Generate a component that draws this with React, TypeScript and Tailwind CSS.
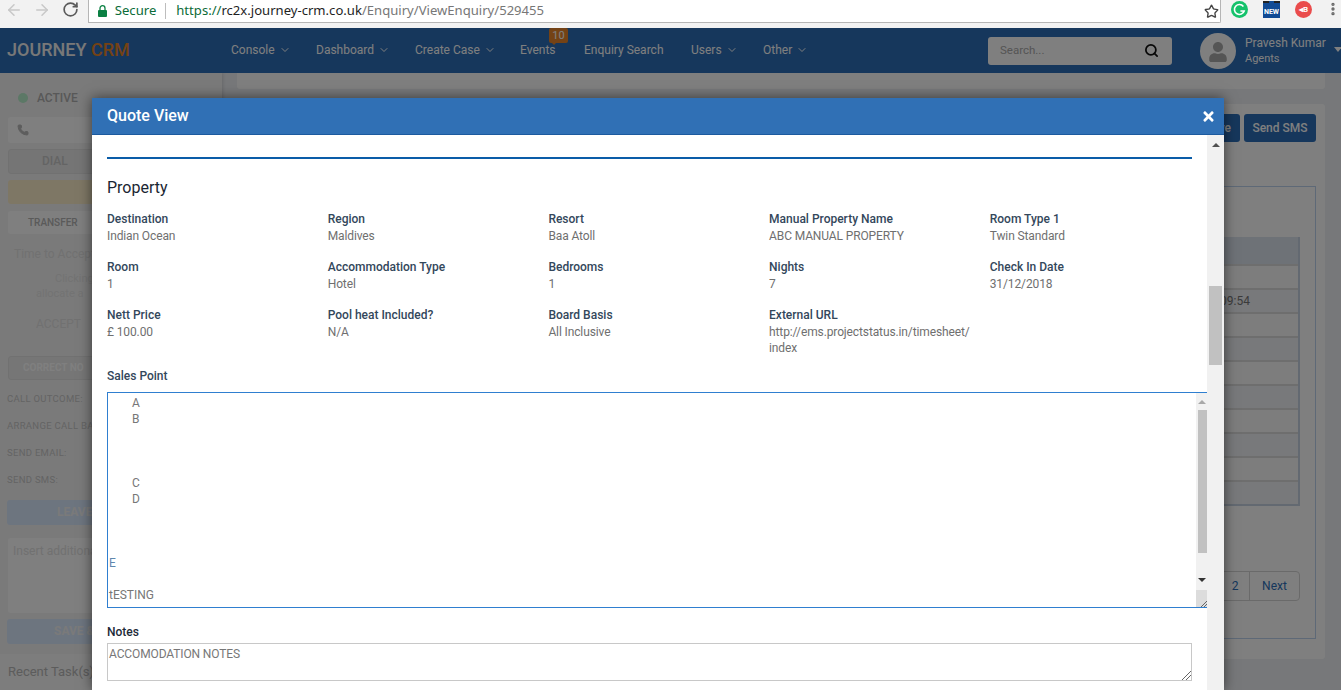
import React from 'react';
import { ArrowLeft, ArrowRight, ChevronDown, MoreVertical, Phone, RotateCw, Search, Star } from 'lucide-react';
import { FaTimes, FaUser } from 'react-icons/fa';

const navItems = [
  { label: 'Console', chevron: true, width: 'w-[85px]' },
  { label: 'Dashboard', chevron: true, width: 'w-[99px]' },
  { label: 'Create Case', chevron: true, width: 'w-[105px]' },
  { label: 'Events', chevron: false, width: 'w-[64px]', badge: '10' },
  { label: 'Enquiry Search', chevron: false, width: 'w-[107px]' },
  { label: 'Users', chevron: true, width: 'w-[72px]' },
  { label: 'Other', chevron: true, width: 'w-[60px]' },
];

const fields = [
  ['Destination', 'Indian Ocean'],
  ['Region', 'Maldives'],
  ['Resort', 'Baa Atoll'],
  ['Manual Property Name', 'ABC MANUAL PROPERTY'],
  ['Room Type 1', 'Twin Standard'],
  ['Room', '1'],
  ['Accommodation Type', 'Hotel'],
  ['Bedrooms', '1'],
  ['Nights', '7'],
  ['Check In Date', '31/12/2018'],
  ['Nett Price', '£ 100.00'],
  ['Pool heat Included?', 'N/A'],
  ['Board Basis', 'All Inclusive'],
  ['External URL', 'http://ems.projectstatus.in/timesheet/\nindex'],
];

const BrowserBar = () => (
  <div className="h-[28px] shrink-0 flex bg-[#f2f2f2] font-['Noto_Sans',sans-serif]">
    <div className="w-[88px] flex items-start pt-[1px] pl-[5px] gap-[10px]">
      <ArrowLeft className="w-[18px] h-[18px] text-[#c8c8c8]" />
      <ArrowRight className="w-[18px] h-[18px] text-[#c8c8c8]" />
      <RotateCw className="w-[17px] h-[17px] text-[#5a5a5a] ml-[1px]" strokeWidth={2.4} />
    </div>
    <div className="w-[1136px] h-[23px] bg-white border border-t-0 border-[#b5b5b5] rounded-br-[2px] flex items-center pl-[9px] text-[13.1px]">
      <svg width="9" height="12" viewBox="0 0 9 12" className="shrink-0">
        <rect x="0" y="5" width="9" height="7" rx="1" fill="#0b8043" />
        <path d="M2 5V3.2a2.5 2.5 0 0 1 5 0V5" fill="none" stroke="#0b8043" strokeWidth="1.3" />
      </svg>
      <span className="ml-[8px] text-[#0b6b38]">Secure</span>
      <span className="w-px h-[16px] bg-[#bdbdbd] ml-[9px]" />
      <span className="ml-[10px] text-[#1f1f1f]">
        <span className="text-[#0b6b38]">https://</span>rc2x.journey-crm.co.uk<span className="text-[#777]">/Enquiry/ViewEnquiry/529455</span>
      </span>
      <Star className="w-[15px] h-[15px] text-[#444] ml-auto mr-[1px]" strokeWidth={2.2} />
    </div>
    <div className="flex-1 flex items-start pt-[1px] pl-[10px] gap-[15px]">
      <svg width="17" height="17" viewBox="0 0 17 17" className="shrink-0">
        <circle cx="8.5" cy="8.5" r="8.5" fill="#15c26b" />
        <path d="M12.4 5.4A5 5 0 1 0 13.2 10H9.4" fill="none" stroke="#fff" strokeWidth="1.6" />
      </svg>
      <span className="w-[17px] h-[17px] shrink-0 bg-[#114a94] border-t-2 border-dashed border-[#222] text-white text-[7px] font-bold leading-[7px] text-center pt-[6px] font-['Roboto',sans-serif]">NEW</span>
      <span className="w-[17px] h-[17px] shrink-0 rounded-full bg-[#ea4c4c] text-white text-[8px] font-bold leading-[17px] text-center font-['Roboto',sans-serif]">◂B</span>
      <MoreVertical className="w-[16px] h-[16px] text-[#666] ml-[-2px]" strokeWidth={3} />
    </div>
  </div>
);

const Header = () => (
  <div className="h-[45px] shrink-0 flex items-center bg-[#2c6eb8] text-white text-[12px] relative">
    <div className="w-[231px] pl-[7px] text-[18px] font-medium -mt-[2px] text-[#f1f1f1]">
      JOURNEY <span className="text-[#e8852a]">CRM</span>
    </div>
    <div className="flex items-center w-[757px] -mt-[2px]">
      {navItems.map((item) => (
        <div key={item.label} className={`relative flex items-center gap-[4px] ${item.width}`}>
          <span>{item.label}</span>
          {item.chevron && <ChevronDown className="w-[12px] h-[12px]" />}
          {item.badge && (
            <span className="absolute left-[29px] top-[-13px] w-[19px] h-[15px] bg-[#e8852a] rounded-[2px] text-center leading-[15px] text-[11px]">
              {item.badge}
              <span className="absolute left-[3px] bottom-[-2px] w-0 h-0 border-x-[2px] border-x-transparent border-t-[2px] border-t-[#e8852a]" />
            </span>
          )}
        </div>
      ))}
    </div>
    <div className="w-[184px] h-[28px] bg-white rounded-[3px] flex items-center justify-between pl-[12px] pr-[13px] text-[#aaa] text-[11.5px]">
      <span className="mt-[1px]">Search...</span>
      <Search className="w-[15px] h-[15px] text-[#111]" strokeWidth={2.8} />
    </div>
    <div className="w-[36px] h-[36px] rounded-full bg-white ml-[28px] flex items-end justify-center overflow-hidden">
      <FaUser className="w-[18px] h-[20px] text-[#aaa] mb-[7px]" />
    </div>
    <div className="ml-[9px] flex flex-col">
      <span className="leading-[16px]">Pravesh Kumar</span>
      <span className="text-[11px] leading-[14px] mt-[1px]">Agents</span>
    </div>
    <span className="absolute right-[-1px] top-[19px] w-0 h-0 border-x-[4px] border-x-transparent border-t-[5px] border-t-white" />
  </div>
);

const Sidebar = () => (
  <div className="w-[222px] shrink-0 bg-[#f5f5f5] shadow-[0_0_4px_rgba(0,0,0,0.2)] flex flex-col text-[#c8c8c8] whitespace-nowrap">
    <div className="mt-[18px] ml-[18px] flex items-center gap-[9px] h-[14px]">
      <span className="w-[10px] h-[10px] rounded-full bg-[#b8f0cc]" />
      <span className="text-[12px] font-medium text-[#b0b0b0]">ACTIVE</span>
    </div>
    <div className="mt-[12px] mx-[8px] h-[26px] bg-[#fff] rounded-[3px] flex items-center pl-[9px]">
      <Phone className="w-[12px] h-[12px] text-[#bbb] fill-[#bbb]" />
    </div>
    <div className="mt-[6px] mx-[8px] h-[25px] bg-[#ebebeb] border border-[#e2e2e2] rounded-[3px] pl-[33px] pt-[2px] text-[12px] font-medium text-[#c8c8c8]">DIAL</div>
    <div className="mt-[6px] mx-[8px] h-[24px] bg-[#fdeecb] rounded-[3px]" />
    <div className="mt-[7px] mx-[8px] h-[23px] bg-white rounded-[3px] text-[10px] font-medium text-[#b4b4b4] pl-[20px] pt-[4px]">TRANSFER</div>
    <div className="mt-[11px] ml-[14px] text-[12px] text-[#e2e2e2]">Time to Accept</div>
    <div className="mt-[8px] ml-[36px] text-[11px] text-[#e6e6e6] leading-[15px]">
      <div className="pl-[19px]">Clicking</div>
      <div>allocate a</div>
    </div>
    <div className="mt-[14px] ml-[36px] text-[12px] text-[#e2e2e2]">ACCEPT</div>
    <div className="mt-[23px] mx-[8px] h-[24px] bg-[#ececec] border border-[#e2e2e2] rounded-[3px] pl-[14px] text-[10px] leading-[22px] font-bold text-white">CORRECT NO</div>
    <div className="mt-[12px] ml-[7px] flex flex-col gap-[13px] text-[9.5px] leading-[14px] tracking-[0.3px] text-[#c8c8c8]">
      <span>CALL OUTCOME:</span>
      <span>ARRANGE CALL BACK</span>
      <span>SEND EMAIL:</span>
      <span>SEND SMS:</span>
    </div>
    <div className="mt-[13px] mx-[7px] h-[25px] bg-[#dbeaff] rounded-[3px] text-[#f5f5f5] text-[12px] font-bold pl-[50px] leading-[25px]">LEAVE</div>
    <div className="mt-[13px] mx-[8px] h-[75px] bg-white rounded-[3px] pl-[5px] pt-[4px] text-[12px] text-[#e2e2e2]">Insert additional</div>
    <div className="mt-[6px] mx-[7px] h-[25px] bg-[#dbeaff] rounded-[3px] text-[#f5f5f5] text-[12px] font-bold pl-[47px] leading-[25px]">SAVE &amp;</div>
    <div className="mt-[10px] flex-1 bg-[#fafafa] pl-[8px] pt-[8px] text-[13px] text-[#b8b8b8]">Recent Task(s)</div>
  </div>
);

const MainPanel = () => (
  <div className="flex-1 pl-[15px] pr-[16px] flex flex-col">
    <div className="h-[16px] bg-white rounded-b-[3px]" />
    <div className="mt-[15px] h-[555px] bg-white rounded-[3px] pt-[10px] pr-[9px] flex flex-col items-end">
      <div className="flex gap-[4px] text-white text-[12px] font-medium">
        <span className="w-[72px] h-[28px] bg-[#2c6eb8] rounded-[3px] leading-[28px] text-right pr-[9px]">Save</span>
        <span className="w-[72px] h-[28px] bg-[#2c6eb8] rounded-[3px] leading-[28px] text-center">Send SMS</span>
      </div>
      <div className="mt-[44px] w-[1000px] h-[453px] border border-[#bcd3ee] pt-[50px] pr-[15px] flex flex-col items-end">
        <div className="w-full border-2 border-t-0 border-[#c7d3e3] text-[12px] text-[#777]">
          <div className="h-[27px] bg-[#dde4ee]" />
          {[0, 1, 2, 3, 4, 5, 6, 7, 8, 9].map((i) => (
            <div key={i} className={`h-[24px] border-t-2 border-[#dcdcdc] text-right pr-[48px] leading-[22px] ${i % 2 === 1 ? 'bg-[#f1f3f7]' : 'bg-[#fafafa]'}`}>
              {i === 1 ? '09:54' : ''}
            </div>
          ))}
        </div>
        <div className="mt-[65px] h-[30px] border border-[#d5d5d5] rounded-[4px] flex text-[12px] text-[#2c6eb8] leading-[28px]">
          <span className="w-[31px] pl-[2px] text-center border-r border-[#d5d5d5]">2</span>
          <span className="w-[49px] text-center">Next</span>
        </div>
      </div>
    </div>
  </div>
);

const ScrollArrow = ({ down, className }: { down?: boolean; className: string }) => (
  <span className={`w-0 h-0 border-x-[4px] border-x-transparent ${down ? 'border-t-[4px]' : 'border-b-[4px]'} ${className}`} />
);

const QuoteModal = () => (
  <div className="absolute left-[92px] top-[70px] bottom-0 w-[1132px] bg-white shadow-[0_0_12px_rgba(0,0,0,0.55)] flex flex-col font-['Roboto',sans-serif]">
    <div className="h-[37px] shrink-0 bg-[#3070b5] border-b border-[#1c5a9e] flex items-center justify-between pl-[15px] pr-[10px] text-white">
      <span className="text-[16px] font-medium">Quote View</span>
      <FaTimes className="w-[11px] h-[15px]" />
    </div>
    <div className="flex-1 flex min-h-0">
      <div className="w-[1115px] shrink-0 pl-[15px] overflow-hidden">
        <div className="mt-[22px] w-[1085px] h-[2px] bg-[#0a5ca8]" />
        <h2 className="mt-[19px] text-[16px] leading-[20px] text-[#1a2633]">Property</h2>
        <div className="mt-[12px] grid grid-cols-[repeat(5,220.7px)] text-[12px] leading-[16px]">
          {fields.map(([label, value]) => (
            <div key={label} className="h-[48px]">
              <div className="font-medium text-[#33475b] h-[18px] leading-[18px]">{label}</div>
              <div className="tracking-[-0.12px] text-[#6f6f6f] whitespace-pre-line">{value}</div>
            </div>
          ))}
        </div>
        <div className="mt-[14px] text-[12px] leading-[16px] font-medium text-[#33475b]">Sales Point</div>
        <div className="mt-[8px] w-[1100px] h-[216px] border border-[#2f7fd0] border-r-0 flex text-[12px] leading-[16px] text-[#777]">
          <div className="flex-1 pt-[2px] pl-[1px]">
            <div className="pl-[23px]">A</div>
            <div className="pl-[23px]">B</div>
            <div className="h-[48px]" />
            <div className="pl-[23px]">C</div>
            <div className="pl-[23px]">D</div>
            <div className="h-[48px]" />
            <div className="text-[#5f87ad]">E</div>
            <div className="h-[16px]" />
            <div>tESTING</div>
          </div>
          <div className="w-[11px] bg-[#f1f1f1] flex flex-col items-center relative">
            <ScrollArrow className="mt-[7px] border-b-[#a8a8a8]" />
            <div className="mt-[6px] w-[9px] ml-[2px] h-[143px] bg-[#c1c1c1]" />
            <ScrollArrow down className="mt-[25px] border-t-[#333]" />
            <div className="absolute bottom-0 left-0 right-0 h-[17px] bg-[#dcdcdc]">
              <svg className="absolute right-0 bottom-0" width="6" height="6" viewBox="0 0 6 6">
                <path d="M0 6 6 0M3 6 6 3" stroke="#666" strokeWidth="1" />
              </svg>
            </div>
          </div>
        </div>
        <div className="mt-[16px] text-[12px] leading-[16px] font-medium text-[#1d2a38]">Notes</div>
        <div className="mt-[3px] w-[1085px] h-[38px] border border-[#c8c8c8] pl-[1px] pt-[2px] text-[12px] tracking-[-0.12px] leading-[16px] text-[#777] relative">
          ACCOMODATION NOTES
          <svg className="absolute right-0 bottom-0" width="9" height="9" viewBox="0 0 9 9">
            <path d="M0 9 9 0M4 9 9 4" stroke="#666" strokeWidth="1" />
          </svg>
        </div>
      </div>
      <div className="w-[17px] shrink-0 bg-[#f1f1f1] flex flex-col items-center">
        <ScrollArrow className="mt-[8px] border-b-[#505050]" />
        <div className="mt-[139px] w-[13px] h-[79px] bg-[#c1c1c1]" />
      </div>
    </div>
  </div>
);

export default function App() {
  return (
    <div className="w-[1341px] h-[690px] overflow-hidden flex flex-col font-['Roboto',sans-serif]">
      <BrowserBar />
      <div className="relative flex-1 flex flex-col overflow-hidden bg-[#eef0f4]">
        <Header />
        <div className="flex-1 flex min-h-0">
          <Sidebar />
          <MainPanel />
        </div>
        <div className="absolute inset-0 bg-black/50" />
        <QuoteModal />
      </div>
    </div>
  );
}
